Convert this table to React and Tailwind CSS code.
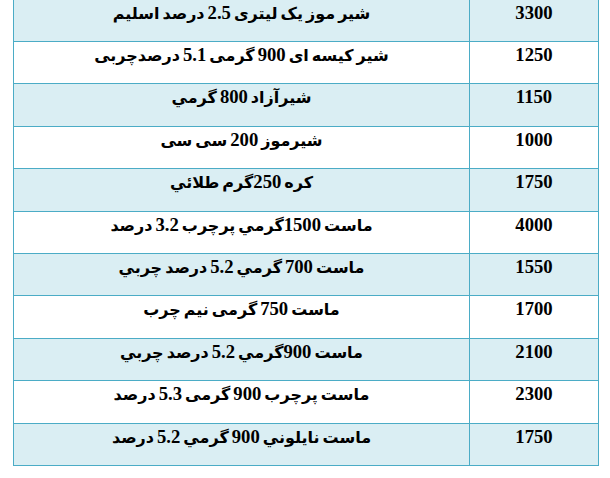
import React from "react";

const rows = [
  ["شیر موز یک لیتری 2.5 درصد اسلیم", "3300"],
  ["شیر کیسه ای 900 گرمی 5.1 درصدچربی", "1250"],
  ["شیرآزاد 800 گرمي", "1150"],
  ["شیرموز 200 سی سی", "1000"],
  ["کره 250گرم طلائي", "1750"],
  ["ماست 1500گرمي پرچرب 3.2 درصد", "4000"],
  ["ماست 700 گرمي 5.2 درصد چربي", "1550"],
  ["ماست 750 گرمی نیم چرب", "1700"],
  ["ماست 900گرمي 5.2 درصد چربي", "2100"],
  ["ماست پرچرب 900 گرمی 5.3 درصد", "2300"],
  ["ماست نايلوني 900 گرمي 5.2 درصد", "1750"],
];

function Name({ text }) {
  const parts = text.split(/([0-9.]+)/);
  return (
    <>
      {parts.map((p, i) =>
        /^[0-9.]+$/.test(p) ? (
          <span key={i}>{p}</span>
        ) : (
          <span key={i} className="text-[16px] [word-spacing:-1px]">
            {p}
          </span>
        )
      )}
    </>
  );
}

export default function App() {
  return (
    <div className="w-[610px] h-[478px] bg-white overflow-hidden">
      <div
        className="ml-[13px] mt-[-1.4px] w-[586px] border-x border-b border-[#4bacc6] font-bold text-[18.67px] leading-[21px] text-black"
        style={{ fontFamily: '"Liberation Serif", "DejaVu Sans", serif' }}
      >
        {rows.map(([name, price], i) => (
          <div
            key={i}
            className={`flex h-[42.4px] border-t border-[#4bacc6] ${i % 2 === 0 ? "bg-[#daeef3]" : "bg-white"}`}
          >
            <div dir="rtl" className="w-[456px] border-r border-[#4bacc6] text-center pt-[2px]">
              <Name text={name} />
            </div>
            <div className="flex-1 text-center pt-[2px]">{price}</div>
          </div>
        ))}
      </div>
    </div>
  );
}
